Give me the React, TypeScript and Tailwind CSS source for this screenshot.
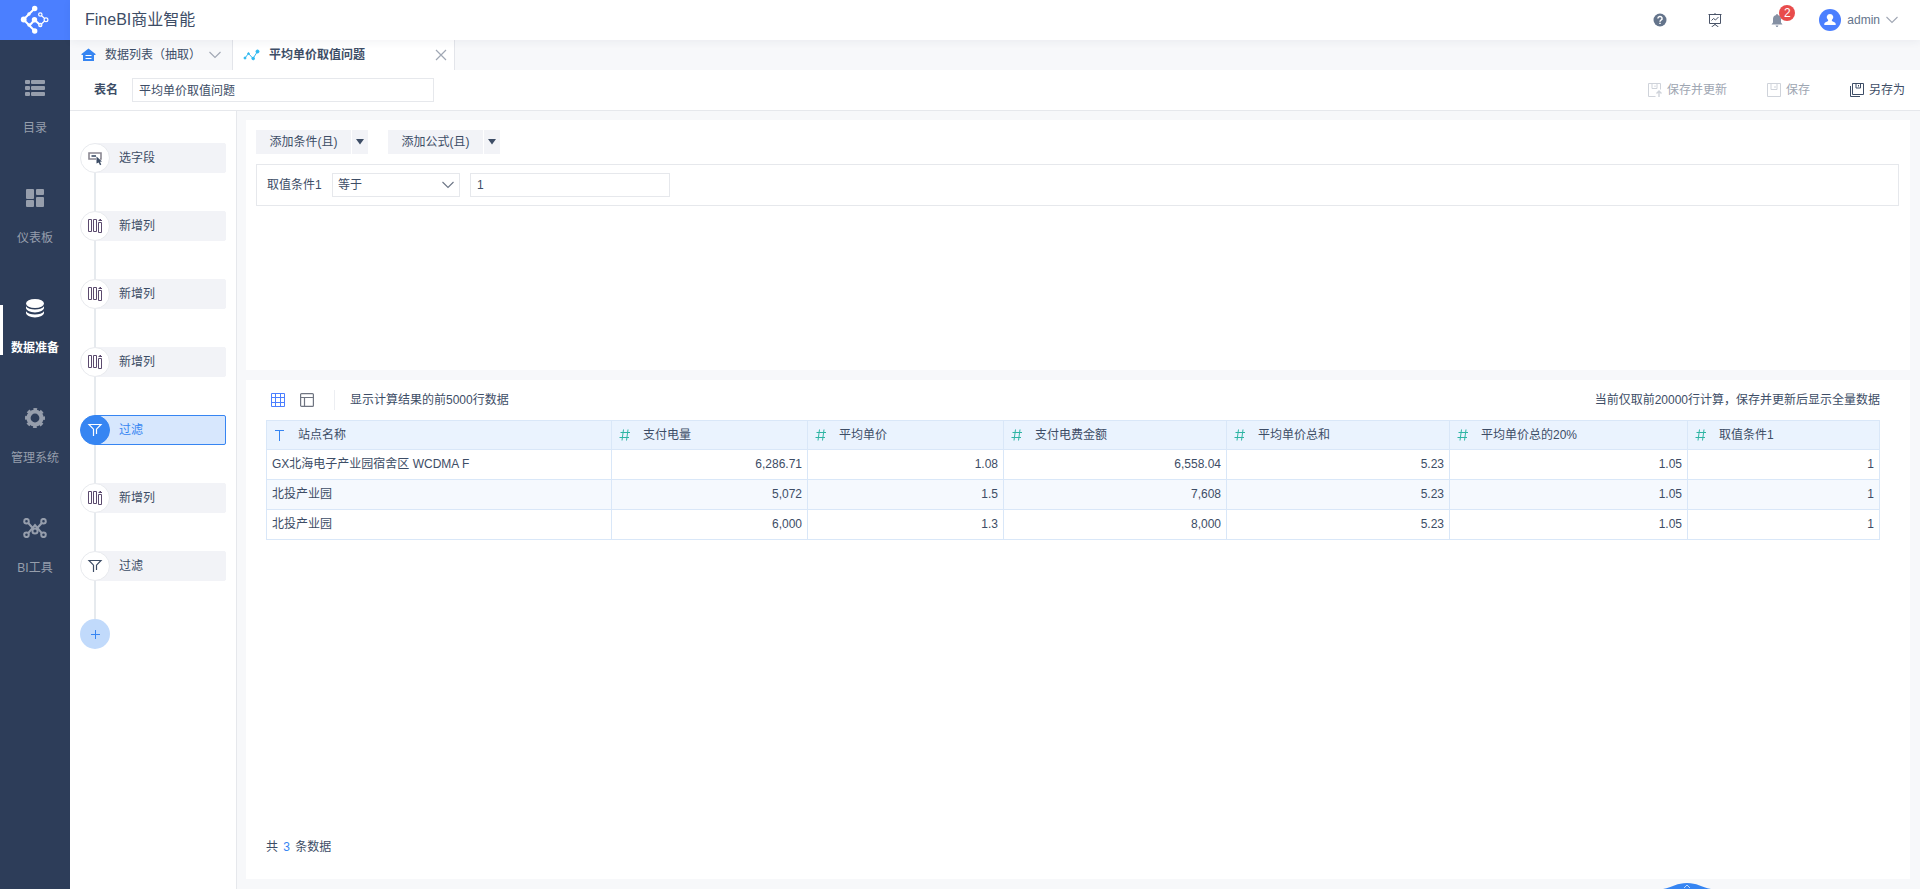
import React, { useState } from 'react';

type StepKind = 'select' | 'column' | 'filter';

interface Step {
  kind: StepKind;
  label: string;
}

const steps: Step[] = [
  { kind: 'select', label: '选字段' },
  { kind: 'column', label: '新增列' },
  { kind: 'column', label: '新增列' },
  { kind: 'column', label: '新增列' },
  { kind: 'filter', label: '过滤' },
  { kind: 'column', label: '新增列' },
  { kind: 'filter', label: '过滤' },
];

const columns = ['站点名称', '支付电量', '平均单价', '支付电费金额', '平均单价总和', '平均单价总的20%', '取值条件1'];
const columnWidths = [345, 196, 196, 223, 223, 238, 192];
const tableWidth = columnWidths.reduce((a, b) => a + b, 0);

const rows = [
  ['GX北海电子产业园宿舍区 WCDMA F', '6,286.71', '1.08', '6,558.04', '5.23', '1.05', '1'],
  ['北投产业园', '5,072', '1.5', '7,608', '5.23', '1.05', '1'],
  ['北投产业园', '6,000', '1.3', '8,000', '5.23', '1.05', '1'],
];

const LogoIcon = () => (
  <svg width="30" height="30" viewBox="0 0 30 30" fill="none" stroke="#fff">
    <path d="M14.7 3.5L3.5 14.5 14.7 26" strokeWidth="2" />
    <path d="M9.500 20.500l5-5.500 5.800 5" strokeWidth="2" />
    <path d="M20.300 9.500l5.700 5.200-5.700 5.300" strokeWidth="1.200" />
    <circle cx="14.700" cy="3.500" r="2.700" fill="#fff" stroke="none" />
    <circle cx="3.700" cy="14.500" r="2.900" fill="#fff" stroke="none" />
    <circle cx="14.700" cy="26" r="2.700" fill="#fff" stroke="none" />
    <circle cx="14.500" cy="14.800" r="2.700" fill="#fff" stroke="none" />
    <circle cx="9" cy="9" r="1.700" fill="#fff" stroke="none" />
    <circle cx="9" cy="20" r="1.700" fill="#fff" stroke="none" />
    <circle cx="20.300" cy="9.500" r="1.700" fill="#4b7fff" strokeWidth="1.200" />
    <circle cx="26" cy="14.700" r="1.900" fill="#4b7fff" strokeWidth="1.200" />
    <circle cx="20.300" cy="20" r="1.600" fill="#a5bfff" strokeWidth="1.200" />
  </svg>
);

const ListIcon = () => (
  <svg width="20" height="20" viewBox="0 0 20 20" fill="currentColor">
    {[2, 8, 14].map(y => (
      <g key={y}>
        <rect x="0" y={y} width="5" height="4" rx="1" />
        <rect x="6" y={y} width="14" height="4" rx="1" />
      </g>
    ))}
  </svg>
);

const DashboardIcon = () => (
  <svg width="20" height="20" viewBox="0 0 20 20" fill="currentColor">
    <rect x="1" y="1" width="8" height="10" rx="1" />
    <rect x="11" y="1" width="8" height="6" rx="1" />
    <rect x="1" y="12" width="8" height="7" rx="1" />
    <rect x="11" y="9" width="8" height="10" rx="1" />
  </svg>
);

const DatabaseIcon = () => (
  <svg width="20" height="20" viewBox="0 0 20 20" fill="currentColor">
    <ellipse cx="10" cy="5.500" rx="9" ry="4.500" />
    <path d="M1 8.200c1.500 2.200 5 3.300 9 3.300s7.500-1.100 9-3.300v1.600c0 2.600-4 4.600-9 4.600s-9-2-9-4.600z" />
    <path d="M1 13.200c1.500 2.200 5 3.300 9 3.300s7.500-1.100 9-3.300v1.600c0 2.600-4 4.600-9 4.600s-9-2-9-4.600z" />
  </svg>
);

const GearIcon = () => (
  <svg width="20" height="20" viewBox="0 0 20 20" fill="none" stroke="currentColor">
    <circle cx="10" cy="10" r="6.500" strokeWidth="4.200" />
    <circle cx="10" cy="10" r="9" strokeWidth="2" strokeDasharray="3.800 3.270" strokeDashoffset="1.900" />
  </svg>
);

const ToolsIcon = () => (
  <svg width="24" height="20" viewBox="0 0 24 20" fill="none" stroke="currentColor" strokeWidth="2">
    <circle cx="3.500" cy="3.200" r="2.300" />
    <circle cx="20.500" cy="3.200" r="2.300" />
    <circle cx="3.500" cy="16.800" r="2.300" />
    <circle cx="20.500" cy="16.800" r="2.300" />
    <path d="M5.200 5l4.500 5M18.800 5l-4.500 5M5.200 15.200L12 7l6.800 8.200" />
    <circle cx="12" cy="13" r="2.600" />
  </svg>
);

const ChevronDown = ({ className }: { className?: string }) => (
  <svg className={className} width="12" height="8" viewBox="0 0 12 8" fill="none" stroke="currentColor" strokeWidth="1.100">
    <path d="M.5 1L6 6.500 11.500 1" />
  </svg>
);

const StepIcon = ({ kind }: { kind: StepKind }) => {
  if (kind === 'select') {
    return (
      <svg width="16" height="16" viewBox="0 0 16 16" fill="none">
        <path d="M9 9H2V3h12v6h-1" stroke="#8a8791" strokeWidth="1.600" />
        <path d="M4.500 6h4.500" stroke="#3d4d66" strokeWidth="1.600" />
        <path d="M9.500 6.500l5.500 5-2 .3 1.300 2.700-1.300.7-1.300-2.700-2.200 1z" fill="#3d4d66" />
      </svg>
    );
  }
  if (kind === 'column') {
    return (
      <svg width="16" height="16" viewBox="0 0 16 16" fill="none" stroke="#5b4a6e">
        <path d="M1.500 1.500h3v12h-3zM6.500 1.500h3v12h-3zM11.500 4.500h3v10h-3z" />
        <path d="M11.500 2.500h3.500M12.500 1.500h1.500" />
      </svg>
    );
  }
  return (
    <svg width="16" height="16" viewBox="0 0 16 16" fill="none" stroke="currentColor" strokeWidth="1.200">
      <path d="M6.500 14V7.200L2 2.500h12L9.500 7.200V12" />
    </svg>
  );
};

const SaveIcon = () => (
  <svg width="14" height="14" viewBox="0 0 14 14" fill="none" stroke="currentColor">
    <path d="M.5.500h13v13H.5zM4 .5v6h6v-6M8 3v2" />
  </svg>
);

const SaveUpdateIcon = () => (
  <svg width="14" height="14" viewBox="0 0 14 14" fill="none" stroke="currentColor">
    <path d="M7.500 13.500H.5V.5h12v6M4 .5v5h5v-5M7 2.500v1.500" />
    <path d="M11 14V9M8.500 10.500L11 8l2.500 2.500" strokeWidth="1.400" />
  </svg>
);

const SaveAsIcon = () => (
  <svg width="14" height="14" viewBox="0 0 14 14" fill="none" stroke="currentColor">
    <path d="M2.500.500h11v11h-11zM6 .5v4.500h4.500V.5M8.500 2v1.500M.5 3v10.500H10" />
  </svg>
);

const Header = () => (
  <header className="relative z-10 flex h-10 shrink-0 items-center bg-white pl-[15px] pr-[22px] shadow-[0_2px_8px_rgba(40,50,80,0.06)]">
    <h1 className="flex-1 text-base text-[#3d4d66]">FineBI商业智能</h1>
    <button aria-label="帮助" className="mr-[41px]">
      <svg width="14" height="14" viewBox="0 0 14 14">
        <circle cx="7" cy="7" r="6.500" fill="#64748b" />
        <path d="M4.900 5.500a2.100 2 0 1 1 3.100 1.700c-.7.400-1 .7-1 1.500M7 9.700v1.400" fill="none" stroke="#fff" strokeWidth="1.500" />
      </svg>
    </button>
    <button aria-label="演示" className="mr-[48px]">
      <svg width="14" height="14" viewBox="0 0 14 14" fill="none" stroke="#4a5468">
        <path d="M.5 1.500h13M1.500 1.500v9h11v-9M7 0v1.500M7 10.500V12M3.500 14L7 11.500l3.500 2.500M3.500 7.500l2-2 2 1.500L10.500 4" />
      </svg>
    </button>
    <button aria-label="消息" className="relative mr-[35px]">
      <svg width="14" height="14" viewBox="0 0 14 14" fill="#8590a3">
        <path d="M6.300 2V1h1.400v1A4.200 4.200 0 0 1 11 6v3.500l1.500 2h-11l1.500-2V6a4.200 4.200 0 0 1 3.300-4zM5.500 12.500h3L7.500 14h-1z" />
      </svg>
      <span className="absolute -top-2 left-[9px] flex h-4 w-4 items-center justify-center rounded-full bg-[#e84c4c] text-xs text-white">2</span>
    </button>
    <button className="flex items-center gap-[6px] text-xs text-[#64748b]">
      <svg width="22" height="22" viewBox="0 0 22 22">
        <circle cx="11" cy="11" r="11" fill="#4b7fff" />
        <path d="M11 5a3.300 3.300 0 0 1 1.900 6v1l3 1.500c.8.500.8 1 .8 2.500H5.300c0-1.500 0-2 .8-2.500l3-1.500v-1A3.300 3.300 0 0 1 11 5z" fill="#fff" />
      </svg>
      admin
      <ChevronDown className="text-[#a0a7b4]" />
    </button>
  </header>
);

const navItems = [
  { label: '目录', icon: ListIcon },
  { label: '仪表板', icon: DashboardIcon },
  { label: '数据准备', icon: DatabaseIcon, active: true },
  { label: '管理系统', icon: GearIcon },
  { label: 'BI工具', icon: ToolsIcon },
];

const Sidebar = () => (
  <aside className="w-[70px] shrink-0 bg-[#2d3d59]">
    <div className="flex h-10 items-center justify-center bg-[#4b7fff]">
      <LogoIcon />
    </div>
    <nav className="pt-[15px]">
      {navItems.map(({ label, icon: Icon, active }) => (
        <a
          key={label}
          href="#"
          className={`relative flex h-[110px] flex-col items-center gap-5 pt-[23px] text-xs leading-5 ${
            active ? 'font-bold text-white' : 'text-[#969eac]'
          }`}
        >
          {active && <span className="absolute left-0 top-[30px] h-[50px] w-[3px] bg-white" />}
          <Icon />
          {label}
        </a>
      ))}
    </nav>
  </aside>
);

const TabBar = () => (
  <div className="flex h-[30px] shrink-0 bg-[#f7f8fa]">
    <button className="flex w-[163px] items-center border-r border-[#e3e5ea] pl-[11px]">
      <svg width="15" height="14" viewBox="0 0 15 14">
        <path d="M7.500.500L14.500 6v1H13v6H2V7H.5V6z" fill="#3685f2" />
        <path d="M4.500 7.500h6M4.500 10.500h6" stroke="#fff" />
      </svg>
      <span className="ml-[9px] mr-2">数据列表（抽取）</span>
      <ChevronDown className="text-[#a0a7b4]" />
    </button>
    <div className="flex w-[222px] items-center border-r border-[#e3e5ea] bg-white pl-[10px] pr-[7px]">
      <svg width="17" height="14" viewBox="0 0 17 14" fill="#2cb8f0" stroke="#2cb8f0">
        <path d="M2 10l3.500-4.500L10 10.500 14.500 3.500" fill="none" />
        <circle cx="2" cy="10" r="1" />
        <circle cx="5.500" cy="5.500" r=".8" />
        <circle cx="10.200" cy="10.500" r="1.300" />
        <circle cx="14.500" cy="3.500" r="1.500" />
      </svg>
      <span className="ml-[9px] flex-1 font-bold">平均单价取值问题</span>
      <button aria-label="关闭">
        <svg width="12" height="12" viewBox="0 0 12 12" stroke="#a0a7b4" strokeWidth="1.200">
          <path d="M1 1l10 10M11 1L1 11" />
        </svg>
      </button>
    </div>
  </div>
);

const NameRow = () => {
  const [name, setName] = useState('平均单价取值问题');

  return (
    <div className="flex h-[41px] shrink-0 items-center border-b border-[#e6e8ec] bg-white pl-6 pr-[15px]">
      <label htmlFor="table-name" className="mr-[14px] font-bold">表名</label>
      <input
        id="table-name"
        value={name}
        onChange={e => setName(e.target.value)}
        className="h-6 w-[302px] border border-[#e6e8ec] px-[6px] pb-[2px] outline-none"
      />
      <div className="ml-auto flex gap-10">
        <button disabled className="flex items-center gap-[5px] text-[#9ea6b2]">
          <span className="text-[#cfd3da]"><SaveUpdateIcon /></span>
          保存并更新
        </button>
        <button disabled className="flex items-center gap-[5px] text-[#9ea6b2]">
          <span className="text-[#cfd3da]"><SaveIcon /></span>
          保存
        </button>
        <button className="flex items-center gap-[5px]">
          <SaveAsIcon />
          另存为
        </button>
      </div>
    </div>
  );
};

const StepPanel = () => {
  const [current, setCurrent] = useState(4);

  return (
    <div className="w-[167px] shrink-0 border-r border-[#e6e8ec] bg-white pl-[10px] pr-[10px] pt-8">
      {steps.map((step, i) => {
        const active = i === current;
        return (
          <div key={i}>
            <button onClick={() => setCurrent(i)} className="flex w-full text-left">
              <span
                className={`relative z-[1] flex h-[30px] w-[30px] shrink-0 items-center justify-center rounded-full border ${
                  active ? 'border-[#3685f2] bg-[#3685f2] text-white' : 'border-[#e8eaee] bg-white'
                }`}
              >
                <StepIcon kind={step.kind} />
              </span>
              <span
                className={`-ml-4 flex h-[30px] flex-1 items-center rounded-xs border pl-6 ${
                  active ? 'border-[#3685f2] bg-[#d7e7fd] text-[#3685f2]' : 'border-[#f2f3f7] bg-[#f2f3f7]'
                }`}
              >
                {step.label}
              </span>
            </button>
            <div className="ml-[14px] h-[38px] w-[2px] bg-[#e6eaee]" />
          </div>
        );
      })}
      <button aria-label="添加步骤" className="flex h-[30px] w-[30px] items-center justify-center rounded-full bg-[#c1dafb]">
        <svg width="10" height="10" viewBox="0 0 10 10" stroke="#3685f2">
          <path d="M1 5.500h9M5.500 1v9" />
        </svg>
      </button>
    </div>
  );
};

const SplitButton = ({ label }: { label: string }) => (
  <div className="flex h-6 gap-px">
    <button className="w-[95px] bg-[#f2f3f7]">{label}</button>
    <button aria-label={`${label}选项`} className="flex w-4 items-center justify-center bg-[#f2f3f7]">
      <svg width="8" height="6" viewBox="0 0 8 6" fill="#3d4d66">
        <path d="M0 0h8L4 5.500z" />
      </svg>
    </button>
  </div>
);

const FilterCard = () => {
  const [value, setValue] = useState('1');

  return (
    <section className="h-[250px] shrink-0 bg-white pl-[10px] pr-[11px] pt-[10px]">
      <div className="flex gap-5">
        <SplitButton label="添加条件(且)" />
        <SplitButton label="添加公式(且)" />
      </div>
      <div className="mt-[10px] flex h-[42px] items-center border border-[#e6e8ec] pl-[10px]">
        <label htmlFor="operator" className="w-[65px]">取值条件1</label>
        <div className="relative mr-[10px]">
          <select id="operator" className="block h-6 w-32 appearance-none border border-[#e6e8ec] pl-[5px] outline-none">
            <option>等于</option>
            <option>不等于</option>
            <option>大于</option>
            <option>小于</option>
          </select>
          <ChevronDown className="pointer-events-none absolute right-[6px] top-2 text-[#6b7585]" />
        </div>
        <input
          aria-label="条件值"
          value={value}
          onChange={e => setValue(e.target.value)}
          className="h-6 w-[200px] border border-[#e6e8ec] px-[6px] outline-none"
        />
      </div>
    </section>
  );
};

const ColumnIcon = ({ text }: { text: boolean }) => (
  text ? (
    <svg width="12" height="12" viewBox="0 0 12 12" fill="none" stroke="#3685f2">
      <path d="M1 1.500h9M5.500 1.500V12" />
    </svg>
  ) : (
    <svg width="12" height="12" viewBox="0 0 12 12" fill="none" stroke="#2fb5a4">
      <path d="M1.500 3.500h9.500M.5 8.500H10M4.500.500l-1.500 11M9 .500l-1.500 11" />
    </svg>
  )
);

const DataTable = () => (
  <table className="w-full table-fixed border-collapse border border-[#d9e7f8]">
    <colgroup>
      {columnWidths.map((w, i) => (
        <col key={i} style={{ width: `${(w / tableWidth) * 100}%` }} />
      ))}
    </colgroup>
    <thead>
      <tr className="h-[29px] bg-[#eaf3fe]">
        {columns.map((col, i) => (
          <th key={col} className="border border-[#d9e7f8] pl-[7px] text-left font-normal">
            <span className="flex items-center gap-3">
              <ColumnIcon text={i === 0} />
              {col}
            </span>
          </th>
        ))}
      </tr>
    </thead>
    <tbody>
      {rows.map((row, r) => (
        <tr key={r} className="h-[30px] even:bg-[#f5f9fe]">
          {row.map((cell, c) => (
            <td key={c} className={`border border-[#d9e7f8] px-[5px] pb-px ${c === 0 ? '' : 'text-right'}`}>
              {cell}
            </td>
          ))}
        </tr>
      ))}
    </tbody>
  </table>
);

const ResultCard = () => (
  <section className="flex flex-1 flex-col bg-white pl-5 pr-[30px]">
    <div className="flex h-10 items-center pl-[5px]">
      <button aria-label="表格视图">
        <svg width="14" height="14" viewBox="0 0 14 14" fill="none" stroke="#4b7fff">
          <path d="M.5.500h13v13H.5zM.5 4.500h13M.5 9.500h13M4.500.5v13M9.500.5v13" />
        </svg>
      </button>
      <button aria-label="列视图" className="ml-[15px]">
        <svg width="14" height="14" viewBox="0 0 14 14" fill="none" stroke="#6f7481" strokeWidth="1.200">
          <rect x=".6" y=".6" width="12.800" height="12.800" rx="1" />
          <path d="M.5 4.500h13M4.500 4.500v9" />
        </svg>
      </button>
      <span className="ml-5 mr-[15px] h-5 w-px bg-[#eceef2]" />
      <span>显示计算结果的前5000行数据</span>
      <span className="ml-auto">当前仅取前20000行计算，保存并更新后显示全量数据</span>
    </div>
    <DataTable />
    <p className="mb-[22px] mt-auto leading-5">
      共 <span className="mx-[2px] text-[#3685f2]">3</span> 条数据
    </p>
  </section>
);

const App: React.FC = () => (
  <div className="flex min-h-screen font-['Liberation_Sans','Noto_Sans_CJK_SC',sans-serif] text-xs text-[#3d4d66]">
    <Sidebar />
    <div className="flex min-w-0 flex-1 flex-col">
      <Header />
      <TabBar />
      <NameRow />
      <div className="flex flex-1">
        <StepPanel />
        <main className="flex min-w-0 flex-1 flex-col gap-[10px] bg-[#f7f8fa] pb-[10px] pl-[9px] pr-[10px] pt-[9px]">
          <FilterCard />
          <ResultCard />
        </main>
      </div>
    </div>

    {/* Drawer handle, peeks out over the bottom edge */}
    <button aria-label="展开" className="fixed bottom-0 right-[209px]">
      <svg width="48" height="6" viewBox="0 0 48 6">
        <path d="M0 6C10 4 14 0 24 0s14 4 24 6z" fill="#3685f2" />
        <path d="M21 5l3-3 3 3" fill="none" stroke="#c1dafb" />
      </svg>
    </button>
  </div>
);

export default App;
